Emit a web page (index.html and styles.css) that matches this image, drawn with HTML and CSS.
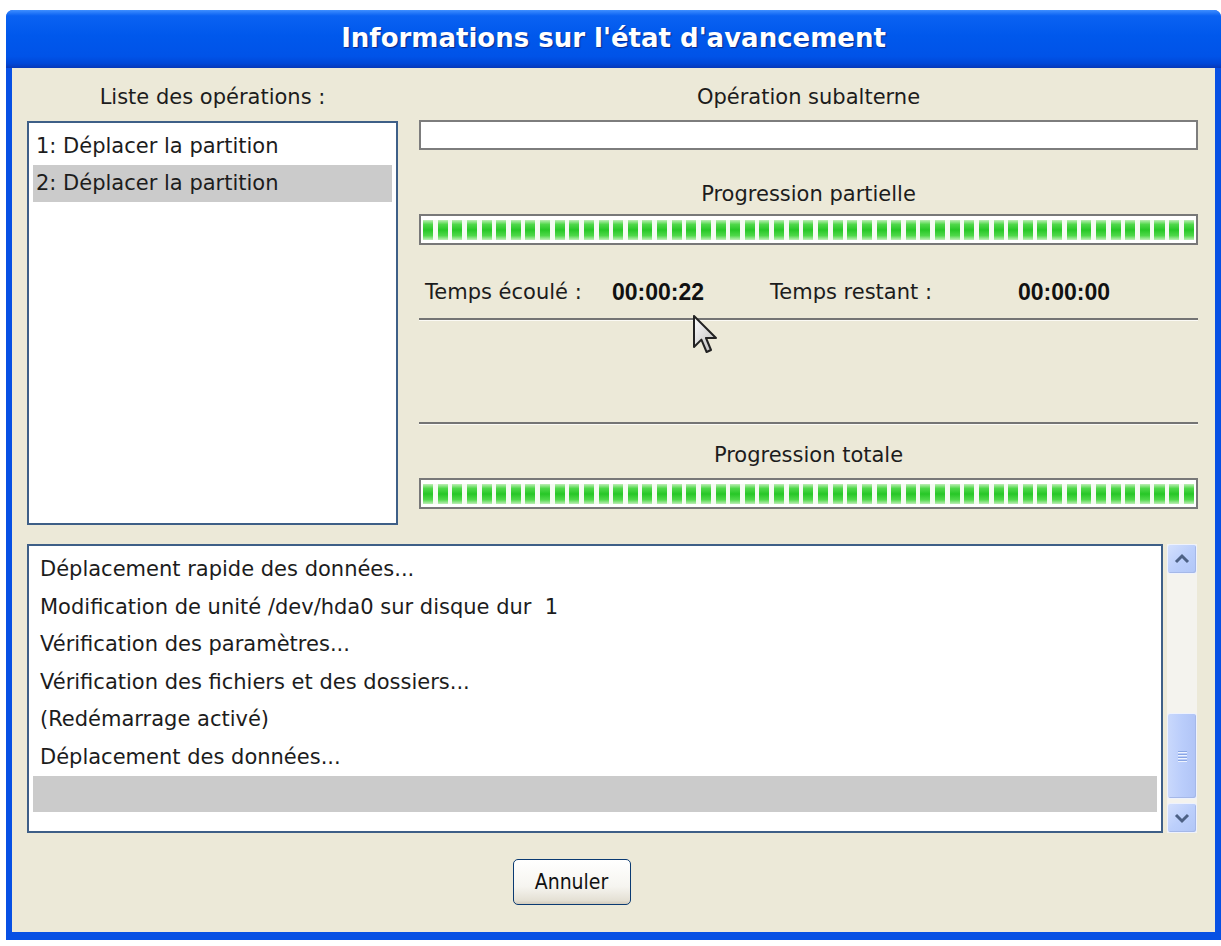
FILE: index.html
```html
<!DOCTYPE html>
<html lang="fr">
<head>
    <meta charset="UTF-8">
    <title>Informations sur l'état d'avancement</title>
    <link rel="stylesheet" href="styles.css">
</head>
<body>
    <div class="window">
        <div class="titlebar">Informations sur l'état d'avancement</div>

        <div class="content">
            <div class="top">
                <div class="ops">
                    <div class="caption">Liste des opérations :</div>
                    <div class="listbox">
                        <div class="row">1: Déplacer la partition</div>
                        <div class="row selected">2: Déplacer la partition</div>
                    </div>
                </div>

                <div class="status">
                    <div class="caption">Opération subalterne</div>
                    <div class="field"></div>

                    <div class="caption caption-partial">Progression partielle</div>
                    <div class="bar"><div class="fill"></div></div>

                    <div class="times">
                        <span>Temps écoulé :</span>
                        <b>00:00:22</b>
                        <span>Temps restant :</span>
                        <b>00:00:00</b>
                    </div>
                    <div class="rule"></div>
                    <div class="rule rule-low"></div>

                    <div class="caption caption-total">Progression totale</div>
                    <div class="bar bar-total"><div class="fill"></div></div>
                </div>
            </div>

            <div class="log">
                <div class="logbox">
                    <div class="row">Déplacement rapide des données...</div>
                    <div class="row">Modification de unité /dev/hda0 sur disque dur&nbsp; 1</div>
                    <div class="row">Vérification des paramètres...</div>
                    <div class="row">Vérification des fichiers et des dossiers...</div>
                    <div class="row">(Redémarrage activé)</div>
                    <div class="row">Déplacement des données...</div>
                    <div class="row selected"></div>
                </div>
                <div class="scrollbar">
                    <div class="sb-btn">
                        <svg width="30" height="30" viewBox="0 0 30 30"><polyline points="9,18 15,12 21,18" fill="none" stroke="#4d6185" stroke-width="3"/></svg>
                    </div>
                    <div class="sb-track"></div>
                    <div class="sb-thumb">
                        <span></span><span></span><span></span><span></span>
                    </div>
                    <div class="sb-btn">
                        <svg width="30" height="30" viewBox="0 0 30 30"><polyline points="9,12 15,18 21,12" fill="none" stroke="#4d6185" stroke-width="3"/></svg>
                    </div>
                </div>
            </div>

            <div class="actions">
                <button type="button">Annuler</button>
            </div>
        </div>
    </div>

    <!-- pointeur de la souris -->
    <svg class="cursor" width="24" height="40" viewBox="0 0 12 20">
        <defs>
            <linearGradient id="cur" x1="0" y1="0" x2="1" y2="1">
                <stop offset="0" stop-color="#ffffff"/>
                <stop offset="1" stop-color="#b8b8b8"/>
            </linearGradient>
        </defs>
        <path d="M0.5,0.5 L0.5,16 L4.2,12.3 L6.8,18.5 L9,17.5 L6.5,11.5 L11.5,11.5 Z" fill="url(#cur)" stroke="#222" stroke-width="1" stroke-linejoin="round"/>
    </svg>
</body>
</html>
```

FILE: styles.css
```css
* {
    margin: 0;
    padding: 0;
    box-sizing: border-box;
}

body {
    background: #fff;
    font-family: "DejaVu Sans", "Noto Sans", sans-serif;
    font-size: 21px;
    color: #1c1c1c;
    position: relative;
    width: 1221px;
    height: 946px;
    overflow: hidden;
}

.window {
    margin: 10px 0 0 6px;
    width: 1215px;
    height: 930px;
    background: #0750e4;
    border-radius: 7px 7px 0 0;
    display: flex;
    flex-direction: column;
}

.titlebar {
    height: 58px;
    flex-shrink: 0;
    border-radius: 7px 7px 0 0;
    background: linear-gradient(#3f8eff 0, #0a62f2 10%, #0058ec 45%, #0053e8 80%, #0047d8 92%, #0637b8 100%);
    color: #fff;
    font-weight: bold;
    font-size: 26px;
    text-align: center;
    line-height: 56px;
    text-shadow: 1px 1px 1px #0a2a8a;
}

.content {
    flex: 1;
    margin: 0 6px 8px 6px;
    background: #ece9d8;
    padding: 16px 17px 0 15px;
}

.top {
    display: grid;
    grid-template-columns: 371px 1fr;
    column-gap: 21px;
    align-items: start;
}

.caption {
    text-align: center;
    height: 26px;
    line-height: 26px;
}

.listbox {
    margin-top: 11px;
    height: 404px;
    background: #fff;
    border: 2px solid #3e5f87;
    padding: 5px 4px;
}

.row {
    height: 37px;
    line-height: 37px;
    padding-left: 3px;
    white-space: nowrap;
}

.row.selected {
    background: #cbcbcb;
}

.field {
    margin-top: 10px;
    height: 30px;
    background: #fff;
    border: 2px solid #7d7d7d;
}

.caption-partial {
    margin-top: 31px;
}

.bar {
    margin-top: 7px;
    height: 31px;
    background: #fff;
    border: 2px solid #787878;
    padding: 4px 2px 3px 2px;
}

.fill {
    height: 20px;
    background:
        repeating-linear-gradient(90deg, transparent 0, transparent 10px, #f4fbf2 10px, #f4fbf2 14.63px),
        linear-gradient(#bdefb6 0, #4fd84a 22%, #27c727 50%, #4fd84a 78%, #bdefb6 100%);
}

.times {
    margin-top: 34px;
    height: 26px;
    line-height: 26px;
    display: grid;
    grid-template-columns: 187px 158px 248px auto;
    padding-left: 6px;
    white-space: nowrap;
}

.times b {
    font-family: "Liberation Sans", Arial, sans-serif;
    font-size: 23px;
    color: #111;
}

.rule {
    margin-top: 13px;
    height: 2px;
    background: #747474;
    box-shadow: 0 1px 0 #fbfaf5;
}

.rule-low {
    margin-top: 102px;
}

.caption-total {
    margin-top: 18px;
}

.bar-total {
    margin-top: 10px;
}

.log {
    margin-top: 19px;
    height: 289px;
    display: flex;
    gap: 4px;
    padding-right: 1px;
}

.logbox {
    flex: 1;
    background: #fff;
    border: 2px solid #3e5f87;
    padding: 5px 4px;
}

.logbox .row {
    height: 37.5px;
    line-height: 37.5px;
    padding-left: 7px;
}

.logbox .row.selected {
    height: 36px;
}

.scrollbar {
    width: 30px;
    display: flex;
    flex-direction: column;
    background: #f4f3ee;
}

.sb-btn {
    height: 30px;
    border: 1px solid #eef2fd;
    border-radius: 3px;
    background: linear-gradient(135deg, #d4e0fd 0, #bccffb 50%, #b1c6f7 100%);
    box-shadow: inset -1px -1px 0 #a5b8e8;
}

.sb-btn svg {
    display: block;
    margin: -1px;
}

.sb-track {
    height: 139px;
}

.sb-thumb {
    height: 86px;
    margin-bottom: 4px;
    border: 1px solid #eef2fd;
    border-radius: 3px;
    background: linear-gradient(90deg, #c9d8fc 0, #bacdfb 50%, #b0c4f6 100%);
    box-shadow: inset -1px -1px 0 #a5b8e8;
    display: flex;
    flex-direction: column;
    justify-content: center;
    align-items: center;
    gap: 2px;
}

.sb-thumb span {
    width: 9px;
    height: 1px;
    background: #8aa6e4;
    box-shadow: 0 1px 0 #eef3fe;
}

.actions {
    margin-top: 26px;
    display: flex;
    justify-content: center;
    padding-right: 82px;
}

button {
    width: 118px;
    height: 46px;
    border: 1px solid #0a3a72;
    border-radius: 5px;
    background: linear-gradient(#ffffff 0, #f6f5f0 60%, #e4e0d4 92%, #d2cbbc 100%);
    font-family: "Liberation Sans Narrow", "DejaVu Sans Condensed", "DejaVu Sans", sans-serif;
    font-stretch: condensed;
    font-size: 21px;
    color: #111;
}

.cursor {
    position: absolute;
    left: 693px;
    top: 315px;
}
```
